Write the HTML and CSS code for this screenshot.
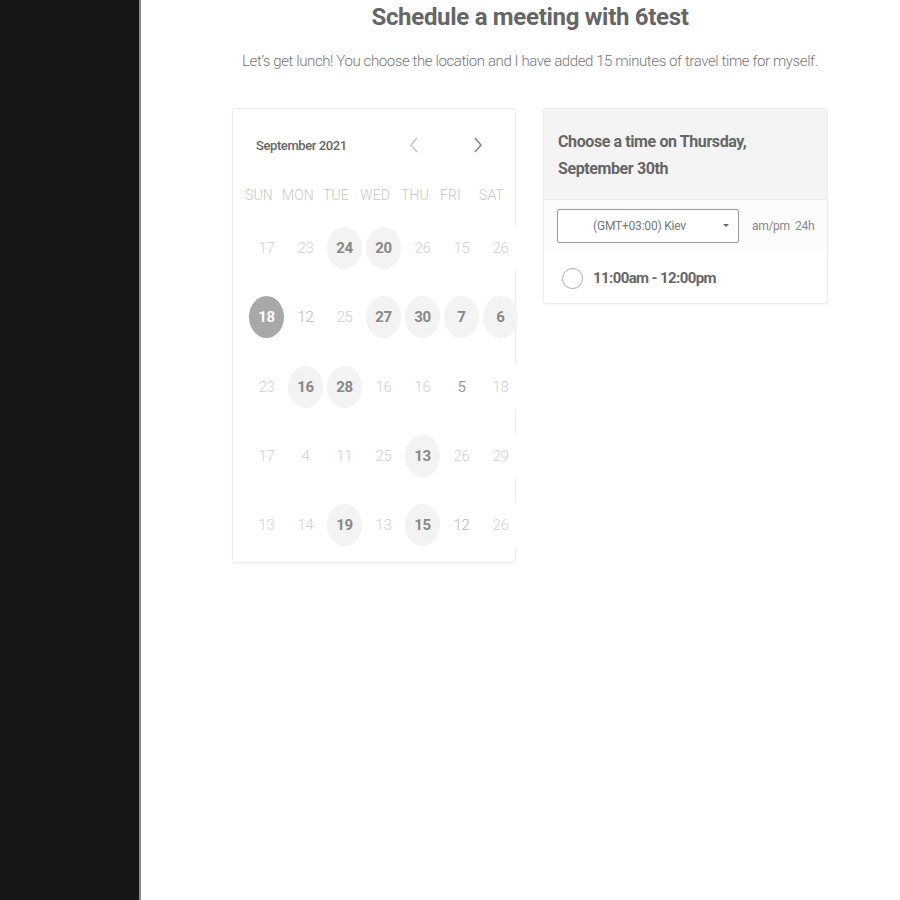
FILE: index.html
```html
<!DOCTYPE html>
<html>
<head>
<meta charset="utf-8">
<link rel="stylesheet" href="styles.css">
</head>
<body>
<div class="page">
  <aside class="sidebar"></aside>
  <main class="main">
    <h1 class="title">Schedule a meeting with 6test</h1>
    <p class="subtitle">Let’s get lunch! You choose the location and I have added 15 minutes of travel time for myself.</p>
    <div class="cards">
      <section class="calendar">
        <div class="cal-head">
          <span class="month">September 2021</span>
          <span class="nav prev"><svg width="10" height="16" viewBox="0 0 10 16"><path d="M8 1 L2 8 L8 15" fill="none" stroke="#c4c4c4" stroke-width="1.4"/></svg></span>
          <span class="nav next"><svg width="10" height="16" viewBox="0 0 10 16"><path d="M2 1 L8 8 L2 15" fill="none" stroke="#8a8a8a" stroke-width="1.6"/></svg></span>
        </div>
        <div class="weekdays">
          <span>SUN</span><span>MON</span><span>TUE</span><span>WED</span><span>THU</span><span>FRI</span><span>SAT</span>
        </div>
        <div class="days">
          <span class="d">17</span><span class="d">23</span><span class="d av">24</span><span class="d av">20</span><span class="d">26</span><span class="d">15</span><span class="d">26</span>
          <span class="d sel">18</span><span class="d mid">12</span><span class="d">25</span><span class="d av">27</span><span class="d av">30</span><span class="d av">7</span><span class="d av">6</span>
          <span class="d">23</span><span class="d av">16</span><span class="d av">28</span><span class="d">16</span><span class="d">16</span><span class="d dark">5</span><span class="d">18</span>
          <span class="d">17</span><span class="d">4</span><span class="d">11</span><span class="d">25</span><span class="d av">13</span><span class="d">26</span><span class="d">29</span>
          <span class="d">13</span><span class="d">14</span><span class="d av">19</span><span class="d">13</span><span class="d av">15</span><span class="d mid">12</span><span class="d">26</span>
        </div>
      </section>
      <section class="times">
        <div class="times-head">Choose a time on Thursday, September 30th</div>
        <div class="tz-row">
          <div class="tz-select"><span>(GMT+03:00) Kiev</span><span class="caret"></span></div>
          <span class="fmt">am/pm&nbsp; 24h</span>
        </div>
        <div class="slot"><span class="radio"></span><span class="slot-text">11:00am - 12:00pm</span></div>
      </section>
    </div>
  </main>
</div>
</body>
</html>
```
FILE: styles.css
```css
* { box-sizing: border-box; }
html, body { margin: 0; padding: 0; background: #fff; }
body { font-family: Roboto, "Liberation Sans", sans-serif; color: #666; }
.page { display: flex; min-height: 900px; }
.sidebar { width: 141px; flex: none; background: #161616; border-right: 2px solid #8a8a8a; }
.main { flex: 1; display: flex; flex-direction: column; align-items: center; padding-left: 19px; }
.title { margin: 3px 0 0; font-size: 24px; font-weight: 700; color: #666; letter-spacing: -0.3px; line-height: 28px; }
.subtitle { margin: 20px 0 0; font-size: 15px; font-weight: 300; color: #777; line-height: 20px; letter-spacing: -0.4px; }
.cards { display: flex; gap: 27px; margin-top: 37px; align-items: flex-start; }
.calendar { width: 284px; height: 455px; border: 1px solid #ececec; border-radius: 3px; box-shadow: 0 1px 2px rgba(0,0,0,0.04); padding: 0 0 0 13px; }
.cal-head { display: flex; align-items: center; height: 69px; padding-left: 10px; padding-top: 3px; }
.month { flex: none; font-size: 13px; font-weight: 500; color: #666; width: 153px; letter-spacing: -0.4px; }
.nav { flex: none; display: flex; width: 64px; }
.weekdays { display: grid; grid-template-columns: repeat(7, 39px); font-size: 14px; font-weight: 300; color: #c8c8c8; height: 18px; line-height: 18px; margin: 8px 0 0 -1px; letter-spacing: 0.1px; }
.weekdays span:nth-child(2), .weekdays span:nth-child(4) { margin-left: -2px; }
.days { display: grid; grid-template-columns: repeat(7, 39px); grid-template-rows: 69px 70px 69px 69px 69px; margin-top: 21px; margin-left: 1px; }
.d { display: flex; align-items: center; justify-content: center; font-size: 15px; font-weight: 300; color: #d0d0d0; background: #fff; margin: 0 2px; height: 46px; letter-spacing: -0.3px; }
.d.av { background: #f3f3f3; border-radius: 50%; color: #888; font-weight: 700; height: 42px; margin: 2px 2px; }
.d.sel { background: #a8a8a8; border-radius: 50%; color: #fff; font-weight: 700; height: 42px; margin: 2px 2px; }
.d.mid { color: #b8b8b8; }
.d.dark { color: #999; font-weight: 400; }
.times { width: 285px; border: 1px solid #ececec; border-radius: 3px; box-shadow: 0 1px 2px rgba(0,0,0,0.05); }
.times-head { background: #f4f4f4; padding: 19px 60px 17px 14px; font-size: 16px; font-weight: 700; line-height: 27px; color: #666; height: 91px; border-bottom: 1px solid #ebebeb; letter-spacing: -0.4px; }
.tz-row { display: flex; align-items: center; padding: 8px 0 8px 13px; background: #fcfcfc; height: 51px; }
.tz-select { flex: none; width: 182px; height: 34px; border: 1px solid #9a9a9a; border-radius: 2px; display: flex; align-items: center; justify-content: space-between; padding: 0 9px 0 35px; font-size: 12px; color: #777; background: #fff; letter-spacing: -0.2px; }
.caret { width: 0; height: 0; border-left: 3px solid transparent; border-right: 3px solid transparent; border-top: 3px solid #666; }
.fmt { flex: none; white-space: nowrap; margin-left: 13px; font-size: 12px; color: #888; letter-spacing: -0.3px; }
.slot { display: flex; align-items: center; height: 52px; padding-left: 18px; padding-top: 2px; }
.radio { width: 21px; height: 21px; border: 1.5px solid #aaa; border-radius: 50%; }
.slot-text { margin-left: 10px; font-size: 15px; font-weight: 700; color: #666; letter-spacing: -0.6px; }
```
